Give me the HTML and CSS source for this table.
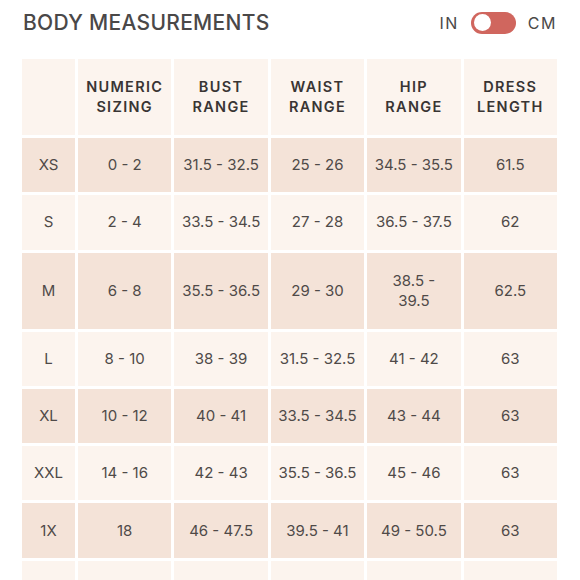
FILE: index.html
```html
<!DOCTYPE html>
<html>
<head>
<meta charset="utf-8">
<link rel="stylesheet" href="styles.css">
</head>
<body>
<div class="page">
  <div class="top">
    <h1 class="title">BODY MEASUREMENTS</h1>
    <div class="units">
      <span class="unit">IN</span>
      <span class="switch"><span class="knob"></span></span>
      <span class="unit">CM</span>
    </div>
  </div>
  <div class="chart">
    <div class="cell head"></div>
    <div class="cell head">NUMERIC<br>SIZING</div>
    <div class="cell head">BUST<br>RANGE</div>
    <div class="cell head">WAIST<br>RANGE</div>
    <div class="cell head">HIP<br>RANGE</div>
    <div class="cell head">DRESS<br>LENGTH</div>

    <div class="cell dark">XS</div>
    <div class="cell dark">0 - 2</div>
    <div class="cell dark">31.5 - 32.5</div>
    <div class="cell dark">25 - 26</div>
    <div class="cell dark">34.5 - 35.5</div>
    <div class="cell dark">61.5</div>

    <div class="cell light">S</div>
    <div class="cell light">2 - 4</div>
    <div class="cell light">33.5 - 34.5</div>
    <div class="cell light">27 - 28</div>
    <div class="cell light">36.5 - 37.5</div>
    <div class="cell light">62</div>

    <div class="cell dark">M</div>
    <div class="cell dark">6 - 8</div>
    <div class="cell dark">35.5 - 36.5</div>
    <div class="cell dark">29 - 30</div>
    <div class="cell dark">38.5 -<br>39.5</div>
    <div class="cell dark">62.5</div>

    <div class="cell light">L</div>
    <div class="cell light">8 - 10</div>
    <div class="cell light">38 - 39</div>
    <div class="cell light">31.5 - 32.5</div>
    <div class="cell light">41 - 42</div>
    <div class="cell light">63</div>

    <div class="cell dark">XL</div>
    <div class="cell dark">10 - 12</div>
    <div class="cell dark">40 - 41</div>
    <div class="cell dark">33.5 - 34.5</div>
    <div class="cell dark">43 - 44</div>
    <div class="cell dark">63</div>

    <div class="cell light">XXL</div>
    <div class="cell light">14 - 16</div>
    <div class="cell light">42 - 43</div>
    <div class="cell light">35.5 - 36.5</div>
    <div class="cell light">45 - 46</div>
    <div class="cell light">63</div>

    <div class="cell dark">1X</div>
    <div class="cell dark">18</div>
    <div class="cell dark">46 - 47.5</div>
    <div class="cell dark">39.5 - 41</div>
    <div class="cell dark">49 - 50.5</div>
    <div class="cell dark">63</div>

    <div class="cell light"></div>
    <div class="cell light"></div>
    <div class="cell light"></div>
    <div class="cell light"></div>
    <div class="cell light"></div>
    <div class="cell light"></div>
  </div>
</div>
</body>
</html>
```

FILE: styles.css
```css
html, body {
  margin: 0;
  padding: 0;
  background: #ffffff;
}

body {
  font-family: Inter, "Noto Sans", sans-serif;
  color: #4a4645;
}

.page {
  padding: 0 23px 0 22px;
}

.top {
  height: 45px;
  display: flex;
  align-items: center;
  justify-content: space-between;
}

.title {
  margin: 0 0 0 1px;
  font-size: 21px;
  font-weight: 500;
  letter-spacing: 0.3px;
  color: #4a4848;
  line-height: 26px;
}

.units {
  display: flex;
  align-items: center;
  gap: 12px;
}

.unit {
  font-size: 16px;
  font-weight: 400;
  letter-spacing: 1.5px;
  color: #4a4848;
}

.switch {
  width: 45px;
  height: 22px;
  border-radius: 11px;
  background: #d0665e;
  display: flex;
  align-items: center;
  padding-left: 3px;
  box-sizing: border-box;
}

.knob {
  width: 17px;
  height: 17px;
  border-radius: 50%;
  background: #ffffff;
}

.chart {
  margin-top: 14px;
  width: 535px;
  display: grid;
  grid-template-columns: 53px repeat(5, 1fr);
  grid-template-rows: 76px 54.3px 54.3px 76px repeat(5, 54.3px);
  gap: 3px;
}

.cell {
  display: flex;
  align-items: center;
  justify-content: center;
  text-align: center;
  font-size: 15px;
  line-height: 20px;
  color: #4f4a48;
}

.head {
  background: #fcf4ee;
  font-weight: 600;
  font-size: 14.5px;
  letter-spacing: 1.3px;
  color: #393534;
}

.dark {
  background: #f4e3d8;
}

.light {
  background: #fcf4ee;
}
```
